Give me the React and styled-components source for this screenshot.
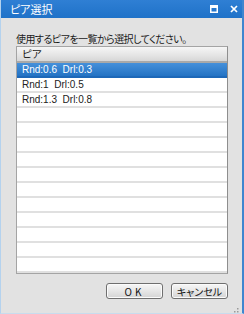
import React from "react";
import styled, { createGlobalStyle } from "styled-components";

const Global = createGlobalStyle`
  html, body { margin: 0; padding: 0; background: #e2e2e2; }
  #root { width: 244px; height: 314px; }
`;

const JP = `"Noto Sans CJK JP", "DejaVu Sans", sans-serif`;
const LATIN = `"Liberation Sans", "Noto Sans CJK JP", sans-serif`;

const Window = styled.div`
  width: 244px;
  height: 314px;
  box-sizing: border-box;
  background: #e2e2e2;
  border-left: 1px solid #b4d2ee;
  border-right: 2px solid #3f86cf;
  border-bottom: 1px solid #c8dcee;
  display: flex;
  flex-direction: column;
  position: relative;
  overflow: hidden;
`;

const TitleBar = styled.div`
  height: 18px;
  flex: none;
  background: linear-gradient(#2f7fd4, #1f72c8);
  display: flex;
  align-items: center;
  padding: 0 4px 0 10px;
  margin-left: -1px;
  margin-right: -2px;
`;

const Title = styled.div`
  flex: 1;
  color: #fff;
  font-family: ${JP};
  font-size: 11px;
  font-feature-settings: "palt";
  line-height: 14px;
`;

const TitleIcons = styled.div`
  display: flex;
  align-items: center;
  gap: 12px;
  padding-right: 2px;
`;

const Content = styled.div`
  flex: 1;
  display: flex;
  flex-direction: column;
  padding: 14px 14px 0 15px;
`;

const Label = styled.div`
  font-family: ${JP};
  font-size: 10px;
  letter-spacing: -0.55px;
  font-feature-settings: "palt";
  color: #1a1a1a;
  line-height: 13px;
  height: 14px;
`;

const ListBox = styled.div`
  width: 212px;
  height: 228px;
  box-sizing: border-box;
  background: #fff;
  border: 1px solid #a4a4a4;
  border-right-color: #8e8e8e;
  display: flex;
  flex-direction: column;
  overflow: hidden;
`;

const Header = styled.div`
  height: 14px;
  flex: none;
  background: linear-gradient(#f6f6f6, #e4e4e4 60%, #d6d6d6);
  border-bottom: 2px solid #a9a9a9;
  font-family: ${JP};
  font-size: 10.5px;
  font-feature-settings: "palt";
  color: #222;
  line-height: 14px;
  padding-left: 5px;
`;

const Row = styled.div`
  height: 13px;
  flex: none;
  border-bottom: 2px solid ${(p) => (p.$selected ? "#1d68b8" : "#e0e0e0")};
  background: ${(p) => (p.$selected ? "linear-gradient(#4590da, #2473c4)" : "#fff")};
  color: ${(p) => (p.$selected ? "#fff" : "#222")};
  font-family: ${LATIN};
  font-size: 10px;
  line-height: 14px;
  padding-left: 5px;
  white-space: pre;
`;

const ButtonRow = styled.div`
  display: flex;
  justify-content: flex-end;
  gap: 8px;
  margin-top: 9px;
  width: 212px;
`;

const Button = styled.button`
  width: 57px;
  height: 16px;
  box-sizing: border-box;
  padding: 0;
  border: 1px solid #6f6f6f;
  border-radius: 3px;
  background: linear-gradient(#f7f7f7, #e6e6e6 50%, #d4d4d4);
  box-shadow: inset 0 0 0 1px #fbfbfb;
  font-family: ${JP};
  font-size: 10px;
  font-feature-settings: "palt";
  color: #111;
  line-height: 13px;
  letter-spacing: ${(p) => p.$spacing || "0px"};
`;

const Grip = styled.div`
  position: absolute;
  right: 3px;
  bottom: 3px;
  width: 8px;
  height: 8px;
`;

const rows = ["Rnd:0.6  Drl:0.3", "Rnd:1  Drl:0.5", "Rnd:1.3  Drl:0.8"];

export default function App() {
  const all = [...rows, ...Array(11).fill("")];
  return (
    <>
      <Global />
      <Window>
        <TitleBar>
          <Title>ピア選択</Title>
          <TitleIcons>
            <svg width="8" height="8" viewBox="0 0 8 8">
              <rect x="0.75" y="0.75" width="6.5" height="6.5" fill="none" stroke="#fff" strokeWidth="1.5" />
              <rect x="0" y="0" width="8" height="3" fill="#fff" />
            </svg>
            <svg width="8" height="8" viewBox="0 0 8 8">
              <path d="M1 1 L7 7 M7 1 L1 7" stroke="#fff" strokeWidth="1.7" />
            </svg>
          </TitleIcons>
        </TitleBar>
        <Content>
          <Label>使用するピアを一覧から選択してください。</Label>
          <ListBox>
            <Header>ピア</Header>
            {all.map((r, i) => (
              <Row key={i} $selected={i === 0}>
                {r}
              </Row>
            ))}
          </ListBox>
          <ButtonRow>
            <Button $spacing="3px">OK</Button>
            <Button>キャンセル</Button>
          </ButtonRow>
        </Content>
        <Grip>
          <svg width="8" height="8" viewBox="0 0 8 8">
            {[[6, 0], [6, 3], [3, 3], [6, 6], [3, 6], [0, 6]].map(([x, y], i) => (
              <rect key={i} x={x} y={y} width="1.5" height="1.5" fill="#9a9a9a" />
            ))}
          </svg>
        </Grip>
      </Window>
    </>
  );
}
